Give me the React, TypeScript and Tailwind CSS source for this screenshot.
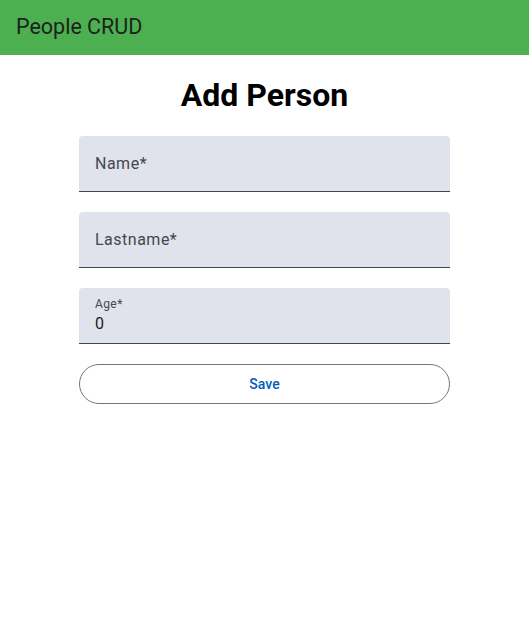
import React from 'react';

const font = {fontFamily: 'Roboto, "Noto Sans", sans-serif'};

const Field = ({label, value}: {label: string; value?: string}) => {
    if (value !== undefined) {
        return (
            <div className="h-[56px] w-full rounded-t-[4px] bg-[#e0e2ec] border-b border-[#44474e] px-4 pt-[8px] flex flex-col">
                <span className="text-[12px] leading-[16px] tracking-[0.4px] text-[#44474e]">{label}</span>
                <span className="text-[16px] leading-[24px] tracking-[0.5px] text-[#1a1b1f]">{value}</span>
            </div>
        )
    }
    return (
        <div className="h-[56px] w-full rounded-t-[4px] bg-[#e0e2ec] border-b border-[#44474e] px-4 flex items-center">
            <span className="text-[16px] leading-[24px] tracking-[0.5px] text-[#44474e]">{label}</span>
        </div>
    )
};

export default function App() {
    return (
        <div className="min-h-screen bg-white" style={font}>
            <div className="h-[55px] bg-[#4caf50] flex items-center px-4">
                <span className="text-[21.5px] text-[#1f1f1f]">People CRUD</span>
            </div>
            <h1 className="text-[32px] font-bold text-center text-black mt-[21px] mb-[22px] leading-[38px]">Add Person</h1>
            <div className="w-[371px] mx-auto flex flex-col gap-5">
                <Field label="Name*"/>
                <Field label="Lastname*"/>
                <Field label="Age*" value="0"/>
                <button className="h-[40px] w-full rounded-full border border-[#74777f] text-[14px] font-medium tracking-[0.1px] text-[#005cbb]">
                    Save
                </button>
            </div>
        </div>
    );
}
